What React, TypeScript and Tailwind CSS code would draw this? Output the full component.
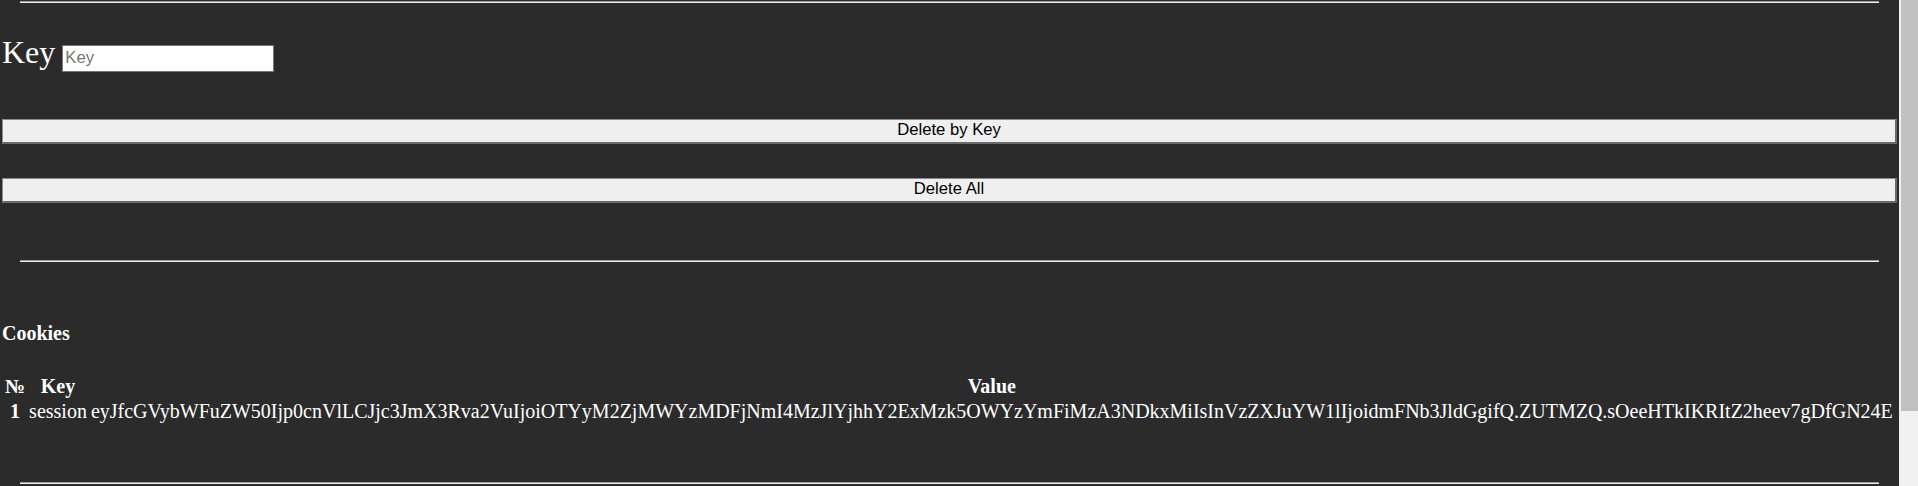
import React from "react";

const COOKIE_VALUE =
  "eyJfcGVybWFuZW50Ijp0cnVlLCJjc3JmX3Rva2VuIjoiOTYyM2ZjMWYzMDFjNmI4MzJlYjhhY2ExMzk5OWYzYmFiMzA3NDkxMiIsInVzZXJuYW1lIjoidmFNb3JldGgifQ.ZUTMZQ.sOeeHTkIKRItZ2heev7gDfGN24E";

const cookies = [{ key: "session", value: COOKIE_VALUE }];

function Rule({ className }: { className?: string }) {
  return (
    <div
      className={`mx-[18px] border-t border-b border-t-[#9a9a9a] border-b-[#eeeeee] ${className ?? ""}`}
    />
  );
}

function WideButton({ label, className }: { label: string; className?: string }) {
  return (
    <button
      type="button"
      className={`block h-[25px] w-full border-t border-l border-r-2 border-b-2 border-t-[#8a8a8a] border-l-[#8a8a8a] border-r-[#6a6a6a] border-b-[#6a6a6a] bg-[#efefef] text-center font-['Liberation_Sans',Arial,sans-serif] text-[16.67px] leading-none text-black ${className ?? ""}`}
    >
      {label}
    </button>
  );
}

export default function App() {
  return (
    <div className="flex h-[486px] w-full overflow-hidden bg-[#2b2b2b]">
      <main className="flex-1 px-[2px] pt-[1px] font-['Liberation_Serif','Times_New_Roman',serif] text-white">
        <Rule />

        <div className="mt-[33px] flex items-baseline gap-[7px]">
          <span className="text-[32px] leading-none">Key</span>
          <input
            type="text"
            placeholder="Key"
            className="h-[27px] w-[212px] border border-[#767676] bg-white px-[2px] font-['Liberation_Sans',Arial,sans-serif] text-[16.67px] text-black outline-none placeholder:text-[#757575]"
          />
        </div>

        <WideButton label="Delete by Key" className="mt-[47px]" />
        <WideButton label="Delete All" className="mt-[34px]" />

        <Rule className="mt-[57px]" />

        <h3 className="mt-[61px] text-[20px] font-bold leading-none">Cookies</h3>

        <table className="mt-[30px] border-separate border-spacing-[2px] text-[20px] leading-[21px]">
          <thead>
            <tr>
              <th className="p-[1px] font-bold">№</th>
              <th className="p-[1px] font-bold">Key</th>
              <th className="p-[1px] font-bold">Value</th>
            </tr>
          </thead>
          <tbody>
            {cookies.map((c, i) => (
              <tr key={c.key}>
                <td className="p-[1px] text-center font-bold">{i + 1}</td>
                <td className="p-[1px] text-center">{c.key}</td>
                <td className="p-[1px] text-center">{c.value}</td>
              </tr>
            ))}
          </tbody>
        </table>

        <Rule className="mt-[57px]" />
      </main>

      {/* fake scrollbar */}
      <div className="flex w-[19px] shrink-0 bg-[#f1f1f1] pl-[2px]">
        <div className="h-[411px] w-full bg-[#c1c1c1]" />
      </div>
    </div>
  );
}
